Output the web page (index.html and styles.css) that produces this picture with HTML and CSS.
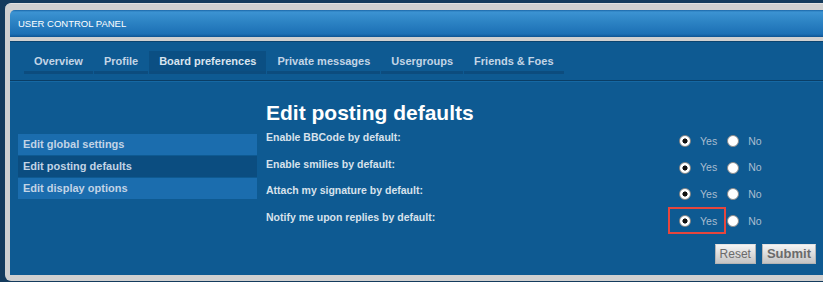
FILE: index.html
```html
<!DOCTYPE html>
<html lang="en">
<head>
    <meta charset="UTF-8">
    <title>User Control Panel - Edit posting defaults</title>
    <link rel="stylesheet" href="styles.css">
</head>
<body>

<div class="frame">
    <div class="cp-title">USER CONTROL PANEL</div>

    <div class="cp-panel">
        <ul class="tabs">
            <li><a href="#">Overview</a></li>
            <li><a href="#">Profile</a></li>
            <li class="active"><a href="#">Board preferences</a></li>
            <li><a href="#">Private messages</a></li>
            <li><a href="#">Usergroups</a></li>
            <li><a href="#">Friends &amp; Foes</a></li>
        </ul>

        <div class="cp-body">
            <ul class="cp-menu">
                <li><a href="#">Edit global settings</a></li>
                <li class="active"><a href="#">Edit posting defaults</a></li>
                <li><a href="#">Edit display options</a></li>
            </ul>

            <form class="cp-main">
                <h2>Edit posting defaults</h2>

                <dl class="opt">
                    <dt>Enable BBCode by default:</dt>
                    <dd>
                        <label class="choice"><input type="radio" name="bbcode" checked> Yes</label>
                        <label class="choice"><input type="radio" name="bbcode"> No</label>
                    </dd>
                </dl>
                <dl class="opt">
                    <dt>Enable smilies by default:</dt>
                    <dd>
                        <label class="choice"><input type="radio" name="smilies" checked> Yes</label>
                        <label class="choice"><input type="radio" name="smilies"> No</label>
                    </dd>
                </dl>
                <dl class="opt">
                    <dt>Attach my signature by default:</dt>
                    <dd>
                        <label class="choice"><input type="radio" name="sig" checked> Yes</label>
                        <label class="choice"><input type="radio" name="sig"> No</label>
                    </dd>
                </dl>
                <dl class="opt">
                    <dt>Notify me upon replies by default:</dt>
                    <dd>
                        <label class="choice highlight"><input type="radio" name="notify" checked> Yes</label>
                        <label class="choice"><input type="radio" name="notify"> No</label>
                    </dd>
                </dl>

                <div class="actions">
                    <button type="reset" class="btn">Reset</button>
                    <button type="submit" class="btn btn-main">Submit</button>
                </div>
            </form>
        </div>
    </div>
</div>

</body>
</html>
```

FILE: styles.css
```css
html, body {
    margin: 0;
    padding: 0;
    height: 282px;
    overflow: hidden;
}

body {
    background: #143b5d;
    font-family: 'Liberation Sans', Arial, sans-serif;
}

.frame {
    margin: 3px -30px 0 5px;
    padding: 6px 0 6px 5px;
    background: #d0d0d0;
    border-radius: 6px;
    border-top: 1px solid #e2e2e2;
}

.cp-title {
    height: 27px;
    line-height: 28px;
    padding-left: 8px;
    color: #fff;
    font-size: 9.5px;
    border-radius: 5px 0 0 0;
    background: linear-gradient(to bottom, #1a66a8 0, #3c93d2 2px, #2f86c6 10px, #1c70b5 24px, #135e9f 26px, #0e5390 27px);
    margin-bottom: 5px;
}

.cp-panel {
    height: 233px;
    background: #0e5a92;
    border-top: 1px solid #0b4470;
    margin-top: -1px;
}

/* tabs */
.tabs {
    list-style: none;
    margin: 0;
    padding: 9px 0 6px 14px;
    display: flex;
    gap: 1px;
    border-bottom: 1px solid #0a3e66;
    box-shadow: 0 1px 0 #1668a3;
}

.tabs a {
    display: block;
    padding: 1px 10px 0;
    line-height: 19px;
    font-size: 11px;
    font-weight: 700;
    color: #c3d5e6;
    text-decoration: none;
    border-bottom: 3px solid #0c4c7e;
}

.tabs .active a {
    background: #0b4f83;
    color: #d9e4ef;
}

/* body */
.cp-body {
    display: flex;
    align-items: flex-start;
    padding-left: 8px;
}

.cp-menu {
    list-style: none;
    margin: 53px 0 0;
    padding: 0;
    width: 239px;
    display: flex;
    flex-direction: column;
    gap: 1px;
}

.cp-menu a {
    display: block;
    padding-left: 5px;
    line-height: 21px;
    font-size: 11px;
    font-weight: 700;
    color: #c2d4e6;
    text-decoration: none;
    background: #1b6dae;
}

.cp-menu .active a {
    background: #0b4d80;
}

.cp-main {
    width: 550px;
    margin-left: 9px;
}

.cp-main h2 {
    margin: 20px 0 5px;
    font-size: 21px;
    line-height: 24px;
    font-weight: 700;
    color: #fff;
}

.opt {
    display: flex;
    height: 26.7px;
    margin: 0;
}

.opt dt {
    width: 402px;
    line-height: 14px;
    font-size: 10.5px;
    font-weight: 700;
    color: #d8e2ec;
}

.opt dd {
    margin: -3px 0 0;
    display: flex;
    align-items: flex-start;
}

.choice {
    display: flex;
    align-items: center;
    gap: 9px;
    padding: 5px 7px 5px 9px;
    border: 2px solid transparent;
    font-size: 10.5px;
    line-height: 12px;
    color: #a9bdd0;
}

.choice + .choice {
    padding-left: 0;
    margin-left: -1px;
}

.choice.highlight {
    border-color: #e6463d;
}

.choice input {
    appearance: none;
    -webkit-appearance: none;
    margin: 1px 0 0;
    width: 12px;
    height: 12px;
    border-radius: 50%;
    background: #fff;
    border: 1px solid #8a8a8a;
    box-sizing: border-box;
}

.choice input:checked {
    background: radial-gradient(circle, #111 0, #111 2.3px, #fff 2.8px);
}

.actions {
    display: flex;
    justify-content: flex-end;
    gap: 6px;
    margin-top: 7px;
}

.btn {
    height: 20px;
    padding: 0 4px;
    border: 1px solid #b4b4b4;
    border-top-color: #e4e4e4;
    background: linear-gradient(to bottom, #f4f4f4, #dcdcdc 50%, #c4c4c4);
    font-family: 'Liberation Sans', Arial, sans-serif;
    font-size: 12px;
    color: #6b6b6b;
    line-height: 18px;
}

.btn-main {
    font-size: 13px;
    font-weight: 700;
}
```
